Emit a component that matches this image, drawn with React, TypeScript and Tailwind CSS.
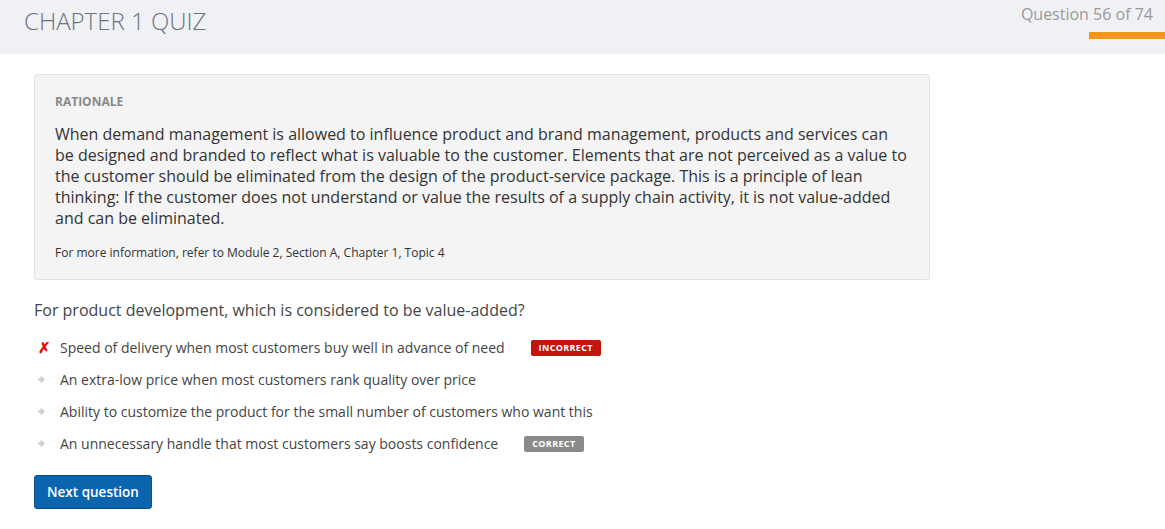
const options = [
  { text: 'Speed of delivery when most customers buy well in advance of need', status: 'incorrect' },
  { text: 'An extra-low price when most customers rank quality over price', status: null },
  { text: 'Ability to customize the product for the small number of customers who want this', status: null },
  { text: 'An unnecessary handle that most customers say boosts confidence', status: 'correct' },
]

function Bullet({ wrong }: { wrong: boolean }) {
  if (wrong) {
    return <span className="w-[26px] text-[15px] leading-none text-[#e0100c] font-bold pl-[4px]">✗</span>
  }
  return (
    <span className="w-[26px] flex items-center pl-[5px]">
      <span className="block w-[5px] h-[5px] rotate-45 bg-[#d2d2d2]" />
    </span>
  )
}

export default function App() {
  return (
    <div className="min-h-[529px] bg-white text-[#333]" style={{ fontFamily: '"Open Sans", "Liberation Sans", sans-serif' }}>
      <header className="h-[54px] bg-[#f0f1f5] flex justify-between">
        <h1 className="pl-[24px] pt-[5px] text-[24px] font-light text-[#6b7380] leading-[32px]">CHAPTER 1 QUIZ</h1>
        <div className="flex flex-col items-end">
          <div className="pr-[12px] pt-[3px] text-[16px] leading-[22px] text-[#9a9a9a]">Question 56 of 74</div>
          <div className="mt-[7px] w-[76px] h-[7px] bg-[#f7941d]" />
        </div>
      </header>

      <main className="px-[34px] pt-[20px]">
        <section className="w-[896px] bg-[#f4f4f4] border border-[#e2e2e2] rounded-[3px] pl-[20px] pr-[10px] pt-[18px] pb-[17px]">
          <div className="text-[12px] font-bold text-[#888] leading-[18px]">RATIONALE</div>
          <p className="mt-[13px] text-[16px] leading-[21px] text-[#333] whitespace-nowrap">
            When demand management is allowed to influence product and brand management, products and services can<br />
            be designed and branded to reflect what is valuable to the customer. Elements that are not perceived as a value to<br />
            the customer should be eliminated from the design of the product-service package. This is a principle of lean<br />
            thinking: If the customer does not understand or value the results of a supply chain activity, it is not value-added<br />
            and can be eliminated.
          </p>
          <p className="mt-[15px] text-[12px] leading-[18px] text-[#333]">For more information, refer to Module 2, Section A, Chapter 1, Topic 4</p>
        </section>

        <h2 className="mt-[18px] text-[16px] leading-[24px] text-[#444]">For product development, which is considered to be value-added?</h2>

        <ul className="mt-[15px] flex flex-col gap-[11px]">
          {options.map(o => (
            <li key={o.text} className="flex items-center h-[21px] text-[14px] text-[#444]">
              <Bullet wrong={o.status === 'incorrect'} />
              <span>{o.text}</span>
              {o.status === 'incorrect' && (
                <span className="ml-[26px] h-[16px] px-[8px] rounded-[2px] bg-[#c4140e] text-white text-[9px] font-bold tracking-[0.04em] leading-[16px]">INCORRECT</span>
              )}
              {o.status === 'correct' && (
                <span className="ml-[26px] h-[16px] px-[8px] rounded-[2px] bg-[#8a8a8a] text-white text-[9px] font-bold tracking-[0.04em] leading-[16px]">CORRECT</span>
              )}
            </li>
          ))}
        </ul>

        <button className="mt-[21px] h-[34px] px-[12px] rounded-[3px] bg-[#0b64ae] border border-[#08508c] text-white text-[13.5px] font-semibold">
          Next question
        </button>
      </main>
    </div>
  )
}
